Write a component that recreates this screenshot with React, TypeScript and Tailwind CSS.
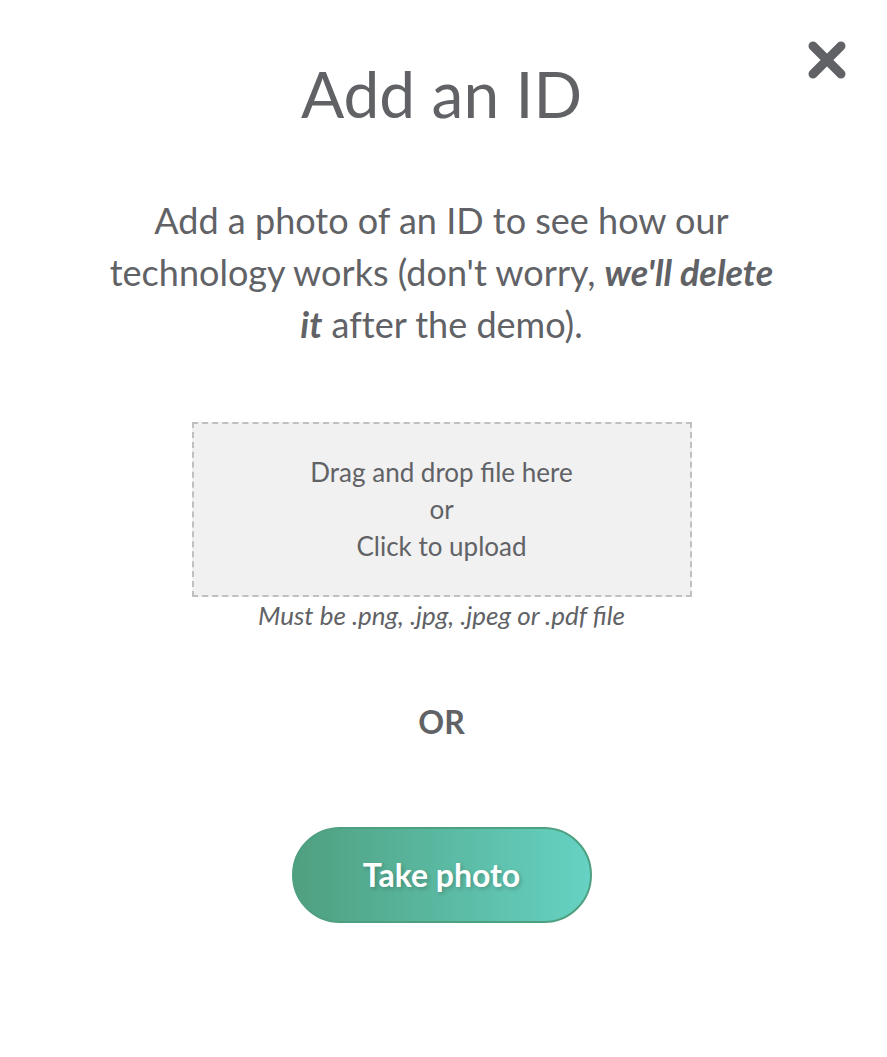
import React, { useState } from "react";

export default function App() {
  const [open, setOpen] = useState(true);
  if (!open) return null;
  return (
    <main className="relative min-h-screen bg-white px-[100px] pt-[55px] pb-16 text-center font-['Lato',sans-serif] text-[#616266]">
      <button
        type="button"
        aria-label="Close"
        onClick={() => setOpen(false)}
        className="absolute top-[41px] right-[41px] cursor-pointer"
      >
        <svg viewBox="0 0 38 38" className="size-[38px]" fill="none" stroke="currentColor" strokeWidth="9" strokeLinecap="round">
          <path d="M5 5 33 33M33 5 5 33" />
        </svg>
      </button>
      <div className="flex flex-col items-center pr-1">
        <h1 className="text-[64px] leading-[77px]">Add an ID</h1>
        <p className="mt-[62px] text-[36px] leading-[52px] [font-variant-ligatures:none]">
          Add a photo of an ID to see how our technology works (don't worry,{" "}
          <em className="font-bold italic">we'll delete it</em> after the demo).
        </p>
        <label className="mt-[72px] flex w-full max-w-[500px] cursor-pointer flex-col border-2 border-dashed border-[#c0c0c0] bg-[#f1f1f1] py-[30px] text-[26px] leading-[37px]">
          <span>Drag and drop file here</span>
          <span>or</span>
          <span>Click to upload</span>
          <input type="file" accept=".png,.jpg,.jpeg,.pdf" className="sr-only" />
        </label>
        <p className="text-[26px] leading-[37px] italic">Must be .png, .jpg, .jpeg or .pdf file</p>
        <p className="mt-[65px] text-[32px] leading-[46px] font-bold">OR</p>
        <button
          type="button"
          className="mt-[82px] h-24 w-[300px] cursor-pointer rounded-full border-2 border-[#4fa080] bg-linear-to-r from-[#4fa080] to-[#66d2c3] text-[32px] font-bold text-white text-shadow-[2px_2px_4px_rgba(0,0,0,0.2)]"
        >
          Take photo
        </button>
      </div>
    </main>
  );
}
